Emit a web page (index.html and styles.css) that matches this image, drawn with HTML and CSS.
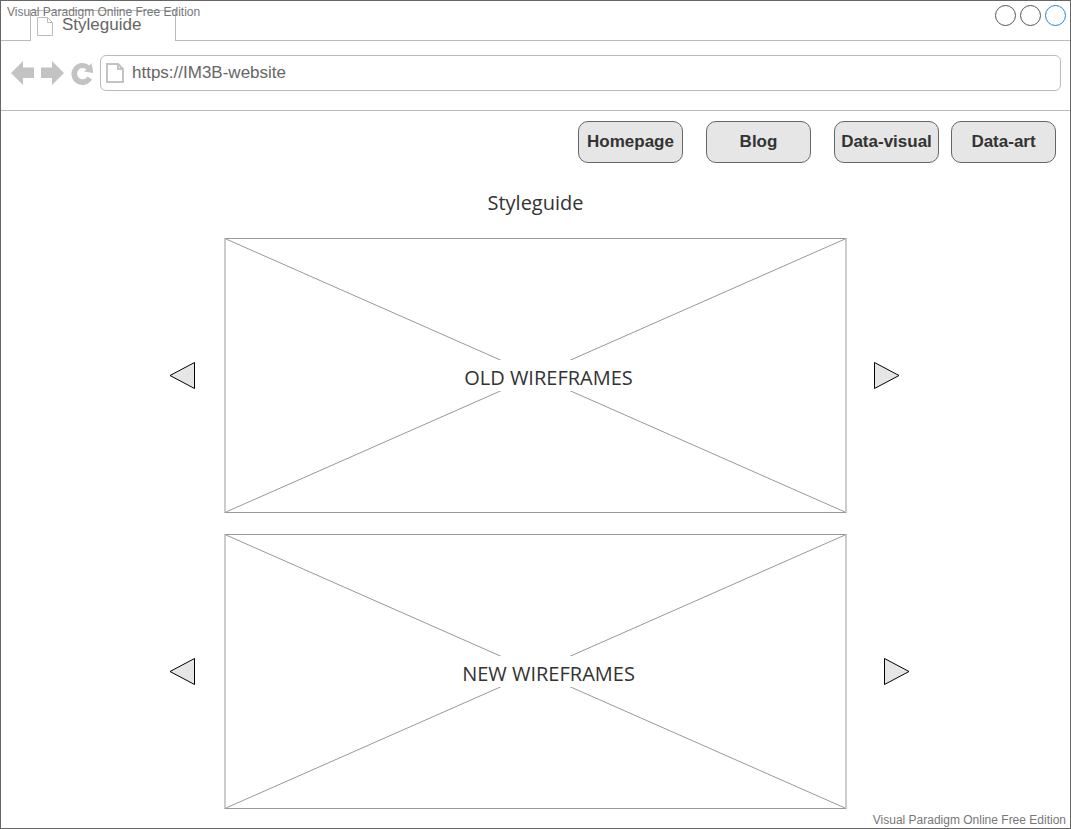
FILE: index.html
```html
<!DOCTYPE html>
<html lang="en">
<head>
<meta charset="utf-8">
<meta name="viewport" content="width=device-width, initial-scale=1">
<title>Styleguide</title>
<link rel="stylesheet" href="styles.css">
</head>
<body>
<div class="window">
  <div class="tabs">
    <div class="tabs-lead"></div>
    <div class="tab">
      <svg class="tab-icon" width="16" height="19" viewBox="0 0 16 19"><path d="M.5.5h10l5 5v13H.5zM10.500 .5v5h5"/></svg>
      <span>Styleguide</span>
    </div>
    <div class="tabs-rest">
      <button class="circle" type="button" aria-label="Minimize"></button>
      <button class="circle" type="button" aria-label="Maximize"></button>
      <button class="circle circle-active" type="button" aria-label="Close"></button>
    </div>
  </div>

  <div class="toolbar">
    <button class="tool" type="button" aria-label="Back">
      <svg width="23" height="24" viewBox="0 0 23 24"><path d="M0 12 12 0v6.500h11v10.500H12V24z"/></svg>
    </button>
    <button class="tool" type="button" aria-label="Forward">
      <svg width="23" height="24" viewBox="0 0 23 24"><path d="M23 12 11 0v6.500H0v10.500h11V24z"/></svg>
    </button>
    <button class="tool" type="button" aria-label="Reload">
      <svg width="22" height="24" viewBox="0 0 22 24"><path d="M20.500 2 22.500 12 13 10.500 15.500 8.500A5.600 5.600 0 1 0 16.500 15.500L21 18.500A11 11 0 1 1 18.500 4.500z"/></svg>
    </button>
    <label class="address">
      <svg width="18" height="20" viewBox="0 0 18 20"><path d="M1 1h11l5 5v13H1zM12 1v5h5"/></svg>
      <input class="address-input" type="text" value="https://IM3B-website" aria-label="Address">
    </label>
  </div>

  <nav class="menu">
    <button class="menu-item" type="button">Homepage</button>
    <button class="menu-item" type="button">Blog</button>
    <button class="menu-item" type="button">Data-visual</button>
    <button class="menu-item menu-item-close" type="button">Data-art</button>
  </nav>

  <main class="content">
    <h1 class="title">Styleguide</h1>
    <section class="slider">
      <button class="arrow arrow-prev" type="button" aria-label="Previous old wireframe">
        <svg width="27" height="28" viewBox="0 0 27 28"><path d="M25.500 .5v26L1 13.500z"/></svg>
      </button>
      <div class="picture">
        <svg class="cross" viewBox="0 0 100 100" preserveAspectRatio="none"><path d="M0 0 100 100M0 100 100 0"/></svg>
        <h2 class="caption">OLD WIREFRAMES</h2>
      </div>
      <button class="arrow arrow-next" type="button" aria-label="Next old wireframe">
        <svg width="27" height="28" viewBox="0 0 27 28"><path d="M1.500 .5v26L26 13.500z"/></svg>
      </button>
    </section>
    <section class="slider">
      <button class="arrow arrow-prev" type="button" aria-label="Previous new wireframe">
        <svg width="27" height="28" viewBox="0 0 27 28"><path d="M25.500 .5v26L1 13.500z"/></svg>
      </button>
      <div class="picture">
        <svg class="cross" viewBox="0 0 100 100" preserveAspectRatio="none"><path d="M0 0 100 100M0 100 100 0"/></svg>
        <h2 class="caption">NEW WIREFRAMES</h2>
      </div>
      <button class="arrow arrow-next arrow-far" type="button" aria-label="Next new wireframe">
        <svg width="27" height="28" viewBox="0 0 27 28"><path d="M1.500 .5v26L26 13.500z"/></svg>
      </button>
    </section>
  </main>

  <span class="mark mark-top">Visual Paradigm Online Free Edition</span>
  <span class="mark mark-bottom">Visual Paradigm Online Free Edition</span>
</div>
</body>
</html>
```
FILE: styles.css
```css
* {
  box-sizing: border-box;
}

body {
  margin: 0;
  background: #fff;
  color: #333;
  font-family: "Liberation Sans", Arial, sans-serif;
}

button {
  margin: 0;
  padding: 0;
  border: 0;
  background: none;
  font: inherit;
  color: inherit;
}

svg {
  display: block;
}

.window {
  position: relative;
  min-height: 100vh;
  border: 1px solid #666;
}

.tabs {
  display: flex;
  height: 40px;
}

.tabs-lead {
  width: 29px;
  border-bottom: 1px solid #bbb;
}

.tab {
  display: flex;
  align-items: center;
  gap: 9px;
  width: 146px;
  margin-top: 9px;
  padding: 0 6px;
  border: 1px solid #bbb;
  border-bottom: 0;
  color: #666;
  font-size: 17px;
  line-height: 20px;
}

.tab span {
  padding-bottom: 2px;
}

.tab-icon {
  fill: #fff;
  stroke: #bbb;
}

.tabs-rest {
  display: flex;
  flex: 1;
  justify-content: flex-end;
  gap: 4px;
  padding: 4px 4px 0 0;
  border-bottom: 1px solid #bbb;
}

.circle {
  width: 21px;
  height: 21px;
  border: 1px solid #555;
  border-radius: 50%;
}

.circle-active {
  border-color: #1989d8;
}

.toolbar {
  display: flex;
  align-items: center;
  gap: 7px;
  height: 70px;
  padding: 0 9px 5px 10px;
  border-bottom: 1px solid #bbb;
}

.tool {
  fill: #c3c3c3;
}

.address {
  display: flex;
  flex: 1;
  align-items: center;
  gap: 8px;
  height: 36px;
  padding: 0 5px;
  border: 1px solid #bbb;
  border-radius: 6px;
}

.address svg {
  fill: #fff;
  stroke: #c3c3c3;
  stroke-width: 2;
}

.address-input {
  flex: 1;
  min-width: 0;
  padding: 0;
  border: 0;
  outline: 0;
  background: none;
  color: #666;
  font: inherit;
  font-size: 17px;
}

.menu {
  display: flex;
  justify-content: flex-end;
  gap: 12px;
  padding: 10px 14px 0;
}

.menu-item {
  width: 105px;
  height: 42px;
  margin-left: 11px;
  border: 1px solid #666;
  border-radius: 10px;
  background: #e6e6e6;
  font-size: 17px;
  font-weight: bold;
}

.menu-item-close {
  margin-left: 0;
}

.content {
  padding-bottom: 19px;
  font-family: "Open Sans", sans-serif;
}

.title {
  margin: 26px 0 21px;
  font-size: 20px;
  font-weight: 400;
  line-height: 28px;
  text-align: center;
}

.slider {
  display: grid;
  grid-template-columns: 1fr minmax(0, 623px) 1fr;
  align-items: center;
}

.slider + .slider {
  margin-top: 21px;
}

.picture {
  display: grid;
  align-items: center;
  height: 275px;
  border: solid;
  border-width: 1px 2px;
  border-color: #999 #ccc;
}

.cross {
  grid-area: 1 / 1;
  width: 100%;
  height: 100%;
  min-height: 0;
}

.cross path {
  stroke: #999;
  vector-effect: non-scaling-stroke;
}

.caption {
  z-index: 1;
  grid-area: 1 / 1;
  margin: 0;
  padding: 4px 0 0 26px;
  background: #fff;
  font-size: 20px;
  font-weight: 400;
  line-height: 27px;
  text-align: center;
}

.arrow {
  fill: #e6e6e6;
  stroke: #000;
}

.arrow-prev {
  justify-self: end;
  margin-right: 28px;
}

.arrow-next {
  justify-self: start;
  margin-left: 26px;
}

.arrow-far {
  margin-left: 36px;
}

.mark {
  position: absolute;
  color: #777;
  font-size: 12px;
  line-height: 14px;
}

.mark-top {
  top: 4px;
  left: 6px;
}

.mark-bottom {
  right: 4px;
  bottom: 1px;
}
```
